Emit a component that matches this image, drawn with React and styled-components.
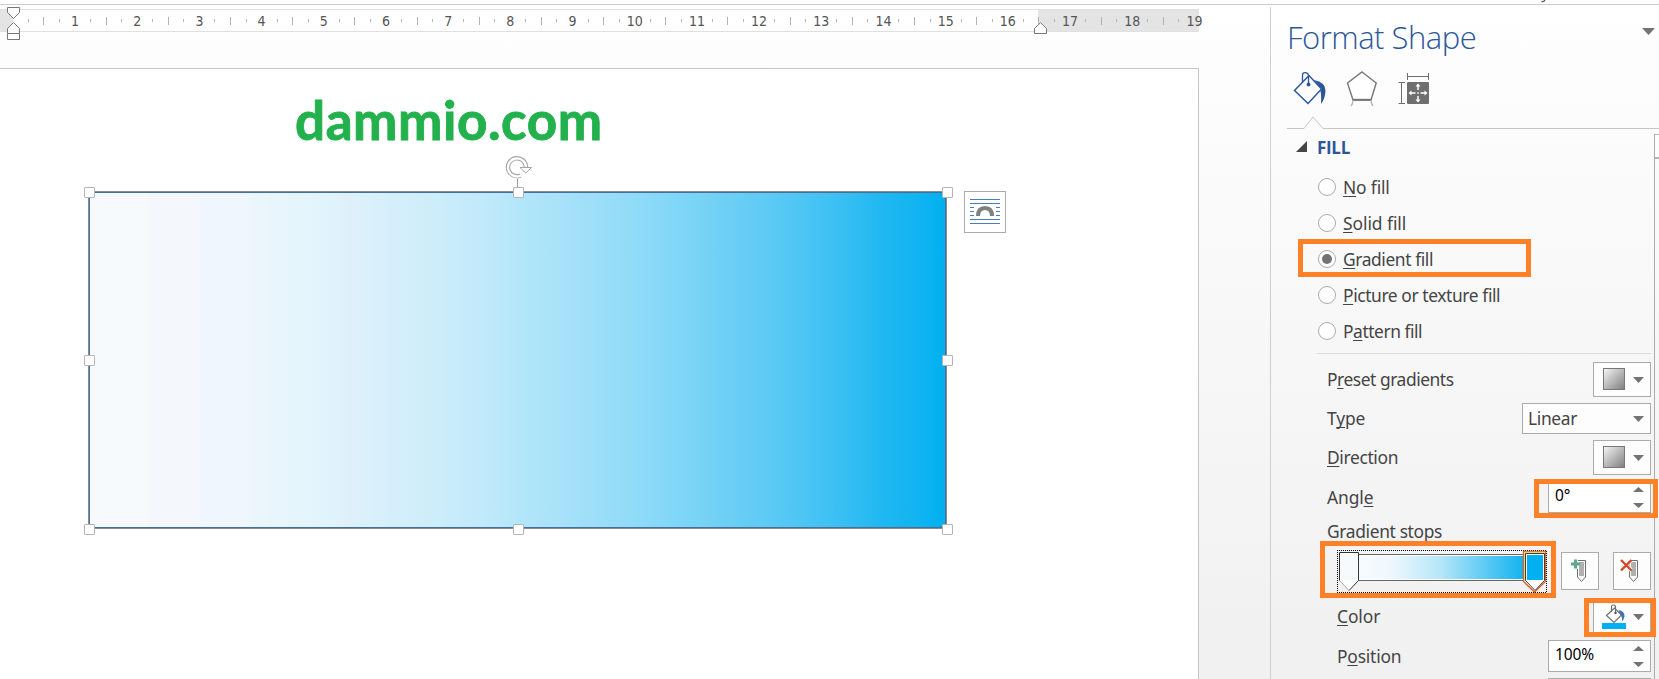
import React from "react";
import styled, { createGlobalStyle, css } from "styled-components";

const Global = createGlobalStyle`
  *{box-sizing:border-box}
  html,body{margin:0;padding:0;overflow:hidden}
  body{font-family:"Noto Sans","Open Sans",sans-serif;color:#444;}
  svg{display:block;flex:none}
`;

const Screen = styled.div`
  width: 1659px;
  height: 679px;
  overflow: hidden;
  display: flex;
  flex-direction: column;
  background: linear-gradient(#fff 5px, #fdfdfd 60px, #f1f1f1 640px);
`;
const RibbonEdge = styled.div`
  height: 5px;
  flex: none;
  background: #fff;
  border-bottom: 1px solid #cdcdcd;
  padding-left: 1539px;
`;
const Main = styled.div`
  flex: 1;
  min-height: 0;
  display: flex;
`;

/* ---------- document side ---------- */
const Workspace = styled.div`
  width: 1270px;
  flex: none;
  display: flex;
  flex-direction: column;
  padding-top: 4px;
`;
const Ruler = styled.div`
  position: relative;
  width: 1199px;
  height: 23px;
  flex: none;
  padding-left: 20.6px;
  display: flex;
  align-items: center;
  border-top: 1px solid #e0e0e0;
  border-bottom: 1px solid #e0e0e0;
  background: linear-gradient(90deg, #e4e4e4 13px, #fff 13px, #fff 1038px, #e4e4e4 1038px);
`;
const Slot = styled.div`
  width: 15.55px;
  flex: none;
  display: flex;
  justify-content: center;
  align-items: center;
`;
const Tick = styled.i`
  width: 1px;
  height: ${(p) => (p.$tall ? 8 : 3)}px;
  background: #b3b3b3;
`;
const RulerNumber = styled.span`
  font: 14px/20px "DejaVu Sans Condensed", "DejaVu Sans", sans-serif;
  font-stretch: condensed;
  color: #555;
`;
const Marker = styled.svg`
  position: absolute;
  left: ${(p) => p.$left}px;
  top: ${(p) => p.$top}px;
`;
const Page = styled.div`
  position: relative;
  width: 1199px;
  flex: 1;
  margin-top: 36px;
  padding-top: 21px;
  background: #fff;
  border-top: 1px solid #c6c6c6;
  border-right: 1px solid #c6c6c6;
`;
const Watermark = styled.div`
  padding-left: 295px;
  font: 700 53px/60px Lato, Carlito, sans-serif;
  letter-spacing: 0.55px;
  -webkit-text-stroke: 0.9px #22b14c;
  color: #22b14c;
  white-space: nowrap;
`;
const Shape = styled.div`
  position: absolute;
  left: 88px;
  top: 122px;
  width: 859px;
  height: 338px;
  border: 1px solid #8d8d8d;
`;
const ShapeFill = styled.div`
  height: 100%;
  border: 1px solid #41719c;
  background: linear-gradient(
    90deg,
    #f6fafd 0, #f6fafd 58px, #f4f8fd 59px, #f4f8fd 109px, #eff6ff 111px,
    #eff6fe 155px, #ebf5fc 167px, #e5f5fc 210px, #def1fb 260px, #d5effa 300px,
    #cdedfa 345px, #c6ebfb 370px, #bfe9fa 400px, #b3e6f9 430px, #a7e1f9 475px,
    #98ddf8 520px, #86d9f7 570px, #72d1f5 625px, #5ccaf4 680px, #3fc1f3 740px,
    #21b8f1 790px, #10b4f1 830px, #00b0f0 855px
  );
`;
const Handle = styled.i`
  position: absolute;
  left: ${(p) => p.$x}px;
  top: ${(p) => p.$y}px;
  width: 11px;
  height: 11px;
  background: #fff;
  border: 1.5px solid #b5b5b5;
  border-radius: 1px;
`;
const Rotator = styled.svg`
  position: absolute;
  left: 415px;
  top: -38px;
`;
const LayoutOptions = styled.div`
  position: absolute;
  left: 964px;
  top: 122px;
  width: 42px;
  height: 42px;
  border: 1px solid #ababab;
  background: #fff;
`;

/* ---------- task pane ---------- */
const Pane = styled.div`
  position: relative;
  flex: 1;
  margin-top: 2px;
  border-left: 1px solid #cfcfcf;
  display: flex;
  flex-direction: column;
`;
const PaneHeader = styled.div`
  display: flex;
  justify-content: space-between;
  height: 63px;
  padding: 5px 4px 0 16px;
`;
const PaneTitle = styled.h1`
  margin: 0;
  font: 300 31px/50px "Open Sans", "Noto Sans", sans-serif;
  letter-spacing: -0.5px;
  color: #2b579a;
`;
const HeaderArrow = styled.div`
  padding-top: 16px;
`;
const PaneTabs = styled.div`
  display: flex;
  height: 46px;
  padding-left: 22px;
`;
const TabIcon = styled.div`
  width: ${(p) => p.$w}px;
`;
const TabRule = styled.div`
  height: 14px;
  padding-left: 16px;
`;
const SectionTitle = styled.div`
  height: 39px;
  padding: 3px 0 0 25px;
  display: flex;
  align-items: flex-start;
  gap: 10px;
  font: 700 17px/30px "Open Sans", sans-serif;
  letter-spacing: -0.3px;
  color: #2b579a;
  svg { margin-top: 8px; }
`;
const RadioRow = styled.div`
  height: 36px;
  padding-left: 47px;
  display: flex;
  align-items: center;
  gap: 7px;
`;
const Radio = styled.span`
  width: 18px;
  height: 18px;
  border-radius: 50%;
  border: 1px solid #ababab;
  background: #fff;
  display: flex;
  align-items: center;
  justify-content: center;
  ${(p) => p.$on && css`&::after {
    content: "";
    width: 10px;
    height: 10px;
    border-radius: 50%;
    background: #737373;
  }`}
`;
const Label = styled.span`
  font-size: 17.4px;
  line-height: 24px;
  letter-spacing: ${(p) => p.$ls ?? -0.35}px;
  white-space: nowrap;
  color: #444;
`;
const Key = styled.span`
  text-decoration: underline;
  text-decoration-thickness: 1px;
  text-underline-offset: 2px;
  text-decoration-skip-ink: none;
`;
const Divider = styled.div`
  height: 1px;
  flex: none;
  margin: 4px 8px 8px 46px;
  background: #dcdcdc;
`;
const Field = styled.div`
  display: flex;
  flex: none;
  align-items: center;
  justify-content: space-between;
  height: ${(p) => p.$h}px;
  margin-bottom: ${(p) => p.$gap ?? 6}px;
  padding: 0 8px 0 ${(p) => (p.$indent ? 66 : 56)}px;
  ${(p) => p.$raise && css`${Label} { margin-top: -2px; }`}
`;
const Box = styled.div`
  width: ${(p) => p.$w}px;
  height: 100%;
  border: 1px solid #ababab;
  background: #fdfdfd;
  display: flex;
  align-items: center;
  justify-content: space-between;
  padding: 0 6px 0 5px;
`;
const SwatchBox = styled(Box)`
  padding: 0 6px 0 ${(p) => p.$pl ?? 9}px;
`;
const Swatch = styled.span`
  width: 22px;
  height: 22px;
  margin-top: -1px;
  border: 1px solid #777;
  background: linear-gradient(135deg, #f4f4f4, #808080);
`;
const SpinBox = styled(Box)`
  background: #fff;
  padding: 0 6px;
`;
const SpinValue = styled.span`
  font-size: 15.5px;
  line-height: 20px;
  letter-spacing: -0.1px;
  margin-top: -4px;
  color: #000;
`;
const StopsLabel = styled.div`
  height: 31px;
  flex: none;
  padding-left: 56px;
`;
const StopsRow = styled.div`
  height: 43px;
  flex: none;
  display: flex;
  align-items: flex-start;
  padding: 0 8px 0 66px;
  margin-bottom: 6px;
  justify-content: space-between;
`;
const StopButtons = styled.div`
  display: flex;
  gap: 14px;
  padding-top: 2px;
`;
const StopButton = styled.div`
  width: 38px;
  height: 38px;
  border: 1px solid #ababab;
  background: #fdfdfd;
`;
const NextField = styled.div`
  height: 1px;
  flex: none;
  margin: 0 8px 0 277px;
  background: #ababab;
`;
const ScrollEdge = styled.div`
  position: absolute;
  left: 383px;
  top: 127px;
  right: 0;
  bottom: 0;
  border-left: 1px solid #ababab;
`;
const ScrollButton = styled.div`
  height: 25px;
  border-top: 1px solid #b5b5b5;
  border-bottom: 2px solid #b5b5b5;
  background: #fff;
`;
const Callout = styled.div`
  position: absolute;
  left: ${(p) => p.$x}px;
  top: ${(p) => p.$y}px;
  width: ${(p) => p.$w}px;
  height: ${(p) => p.$h}px;
  border: 5px solid #ff8127;
`;

const Caret = ({ w = 11, h = 6, up }) => (
  <svg width={w} height={h} viewBox="0 0 12 6" preserveAspectRatio="none">
    <path d={up ? "M0 6L6 0L12 6Z" : "M0 0H12L6 6Z"} fill="#737373" />
  </svg>
);

const SpinArrows = styled.div`
  display: flex;
  flex-direction: column;
  gap: 11px;
`;
const Spin = ({ value }) => (
  <SpinBox $w={103}>
    <SpinValue>{value}</SpinValue>
    <SpinArrows>
      <Caret h={5} up />
      <Caret h={5} />
    </SpinArrows>
  </SpinBox>
);

const BucketIcon = () => (
  <svg width="34" height="36" viewBox="0 0 34 36" fill="none" stroke="#2b579a" strokeWidth="1.5">
    <path d="M1.5 20.5L16 5.5L28.5 19L15 33.5Z" />
    <path d="M9.5 12.5V5Q9.5 2.6 12 2.6Q15.5 2.6 15.5 6V14" strokeWidth="1.3" />
    <circle cx="15.5" cy="14.5" r="1.9" fill="#2b579a" stroke="none" />
    <path d="M21 10Q32.500 12 32.500 21Q32 29 28 34Q28.500 26 27.500 21L29 19Z" fill="#2b579a" stroke="none" />
  </svg>
);
const PentagonIcon = () => (
  <svg width="32" height="38" viewBox="0 0 32 38" fill="none" stroke="#777" strokeWidth="1.4">
    <path d="M16 2L30.200 13L25 30H7L1.500 13Z" fill="#fff" />
    <path d="M6.500 29.800H25.500" strokeWidth="2" />
    <path d="M7 30Q7 34 5 36M25 30Q25 34 27 36" stroke="#b5b5b5" />
  </svg>
);
const SizeIcon = () => (
  <svg width="32" height="36" viewBox="0 0 32 36" fill="none" stroke="#6f6f6f">
    <rect x="9" y="12" width="22" height="22" rx="1" fill="#6f6f6f" stroke="none" />
    <path d="M9.500 3V10M30.500 3V10M9.500 6.500H30.500M.5 12.500H7M.5 33.500H7M3.500 12.500V33.500" />
    <path d="M20 14.500V20M20 26V31.500M12 23H17.500M22.500 23H28" stroke="#fff" strokeWidth="1.5" />
    <path d="M17.500 16.500L20 13.500L22.500 16.500ZM17.500 29.500L20 32.500L22.500 29.500ZM13.500 20.500L10.500 23L13.500 25.500ZM26.500 20.500L29.500 23L26.500 25.500Z" fill="#fff" stroke="none" />
    <rect x="19.300" y="22.300" width="1.500" height="1.500" fill="#fff" stroke="none" />
  </svg>
);
const ColorIcon = () => (
  <svg width="25" height="26" viewBox="0 0 25 26" fill="none" stroke="#6f6f6f" strokeWidth="1.2">
    <path d="M4.500 11.500L12.500 4L19.500 11L12 18.500Z" fill="#fff" />
    <path d="M9.500 8V2.500Q9.500 1 11.500 1Q13.500 1 13.500 3V9" />
    <circle cx="13.500" cy="9" r="1.200" fill="#555" stroke="none" />
    <path d="M16.500 6Q22.500 7 22.500 12Q22 16 20 17.500Q20.500 13 18.500 11Z" fill="#3f75b5" stroke="none" />
    <rect x="0" y="19" width="24" height="6" fill="#00b0f0" stroke="none" />
  </svg>
);
const StopIcon = ({ remove }) => (
  <svg width="36" height="36" viewBox="0 0 36 36" fill="none">
    <path d="M15.500 7.500H23.500V24L19.500 28.500L15.500 24Z" stroke="#6f6f6f" fill="#fdfdfd" />
    <path d="M17 9H22V23H17Z" fill="#b0b0b0" />
    {remove ? (
      <>
        <path d="M7 7L17 17M17 7L7 17" stroke="#fdfdfd" strokeWidth="4.500" />
        <path d="M7 7L17.500 17.500M17.500 7L7 17.500" stroke="#d24726" strokeWidth="2.4" />
      </>
    ) : (
      <>
        <path d="M8 5H16V16H8Z" fill="#fdfdfd" />
        <path d="M13.500 6.500V15.500M9 11H18" stroke="#62a68c" strokeWidth="3.200" />
      </>
    )}
  </svg>
);
const GradientStops = () => (
  <svg width="211" height="44" viewBox="0 0 211 44" fill="none">
    <defs>
      <linearGradient id="stops">
        <stop offset="0" stopColor="#f7fbfe" />
        <stop offset=".2" stopColor="#eff8fe" />
        <stop offset=".5" stopColor="#b5e6f9" />
        <stop offset=".75" stopColor="#63ccf5" />
        <stop offset="1" stopColor="#12b3f1" />
      </linearGradient>
    </defs>
    <path d="M0 .5H210M0 42.500H210M.5 0V43M209.500 1V43" stroke="#000" strokeDasharray="1 1" shapeRendering="crispEdges" />
    <rect x="20" y="4.500" width="170" height="26" fill="#fff" stroke="#666" />
    <rect x="20" y="6" width="167" height="23" fill="url(#stops)" />
    <path d="M2.500 2.500H21.500V30.500L12 40.500L2.500 30.500Z" fill="#fff" />
    <path d="M12 40.500L2.500 30.500" stroke="#aaa" />
    <path d="M2.500 30.500V2.500H21.500V30.500L12 40.500" stroke="#333" />
    <rect x="4" y="4" width="16" height="26" fill="#f6fafd" />
    <path d="M186.500 1.500H208.500V31.500L197.500 42L186.500 31.500Z" fill="#fff" stroke="#d8602c" strokeWidth="1.300" />
    <path d="M187.500 2.500H207.500M187.800 3V31" stroke="#f3d36b" strokeWidth="1.500" />
    <path d="M188.500 3.500H207.500V30.500L198 40.500L188.500 30.500Z" stroke="#443c33" fill="#fff" />
    <rect x="190" y="5" width="16" height="25" fill="#00b0f0" />
  </svg>
);

const slots = Array.from({ length: 76 }, (_, i) => i);
const fills = [
  ["", "N", "o fill", -0.15],
  ["", "S", "olid fill", -0.05],
  ["", "G", "radient fill", -0.4],
  ["", "P", "icture or texture fill", -0.4],
  ["P", "a", "ttern fill", -0.45],
];
const Text = ({ parts }) => (
  <Label $ls={parts[3]}>{parts[0]}<Key>{parts[1]}</Key>{parts[2]}</Label>
);
const handles = [
  [-5, -5], [424, -5], [853, -5],
  [-5, 163], [853, 163],
  [-5, 332], [424, 332], [853, 332],
];

export default function App() {
  return (
    <Screen>
      <Global />
      <RibbonEdge>
        <svg width="10" height="3"><path d="M2.500 1.500Q5 2 6 0" stroke="#555" fill="none" strokeWidth="1.300" /></svg>
      </RibbonEdge>
      <Main>
        <Workspace>
          <Ruler>
            {slots.map((i) => (
              <Slot key={i}>
                {i % 4 === 3 ? <RulerNumber>{(i + 1) / 4}</RulerNumber> : <Tick $tall={i % 4 === 1} />}
              </Slot>
            ))}
            <Marker $left={7} $top={-3} width="14" height="34" fill="#fff" stroke="#777">
              <path d="M.5 .5H12.500V5.500L6.500 11.500L.5 5.500Z" />
              <path d="M.5 26.500V21.500L6.500 15.500L12.500 21.500V26.500Z" />
              <path d="M.5 26.500H12.500V32.500H.5Z" />
            </Marker>
            <Marker $left={1034} $top={12} width="14" height="14" fill="#fff" stroke="#777">
              <path d="M.5 11.500V6.500L6.500 .7L12.500 6.500V11.500Z" />
            </Marker>
          </Ruler>
          <Page>
            <Watermark>dammio.com</Watermark>
            <Shape>
              <ShapeFill />
              <Rotator width="30" height="38" viewBox="0 0 30 38" fill="none">
                <path d="M13.500 25V34" stroke="#999" />
                <path d="M16.500 21.500A9 9 0 1 1 22 13" stroke="#a6a6a6" strokeWidth="4.500" />
                <path d="M17 21.500A9 9 0 1 1 22 14" stroke="#fff" strokeWidth="2.300" />
                <path d="M16 13.500H27.500L21.800 19Z" fill="#fff" stroke="#a6a6a6" />
              </Rotator>
              {handles.map(([x, y]) => <Handle key={`${x} ${y}`} $x={x} $y={y} />)}
            </Shape>
            <LayoutOptions>
              <svg width="40" height="40" fill="none">
                <path d="M5 7.500H35M5 11.500H35M5 15.500H9M31 15.500H35M5 19.500H9M31 19.500H35M5 23.500H9M31 23.500H35M5 27.500H35M5 31.500H35" stroke="#4a7ebb" />
                <path d="M13 24Q13 16 20 16Q27 16 27 24" stroke="#808080" strokeWidth="4" />
              </svg>
            </LayoutOptions>
          </Page>
        </Workspace>
        <Pane>
          <PaneHeader>
            <PaneTitle>Format Shape</PaneTitle>
            <HeaderArrow><Caret w={13} h={7} /></HeaderArrow>
          </PaneHeader>
          <PaneTabs>
            <TabIcon $w={53}><BucketIcon /></TabIcon>
            <TabIcon $w={52}><PentagonIcon /></TabIcon>
            <TabIcon $w={40}><SizeIcon /></TabIcon>
          </PaneTabs>
          <TabRule>
            <svg width="372" height="14" fill="none"><path d="M0 12.500H17L26 1L36 12.500H372" stroke="#c6c6c6" /></svg>
          </TabRule>
          <SectionTitle>
            <svg width="11" height="11"><path d="M11 0V11H0Z" fill="#444" /></svg>
            FILL
          </SectionTitle>
          {fills.map((parts, i) => (
            <RadioRow key={i}>
              <Radio $on={i === 2} />
              <Text parts={parts} />
            </RadioRow>
          ))}
          <Divider />
          <Field $h={35} $raise>
            <Text parts={["P", "r", "eset gradients", -0.45]} />
            <SwatchBox $w={58}><Swatch /><Caret /></SwatchBox>
          </Field>
          <Field $h={31} $raise>
            <Text parts={["T", "y", "pe", -0.1]} />
            <Box $w={129}><Label>Linear</Label><Caret /></Box>
          </Field>
          <Field $h={35} $raise>
            <Text parts={["", "D", "irection"]} />
            <SwatchBox $w={58}><Swatch /><Caret /></SwatchBox>
          </Field>
          <Field $h={32} $gap={6}>
            <Text parts={["Angl", "e", "", -0.1]} />
            <Spin value="0°" />
          </Field>
          <StopsLabel><Label>Gradient stops</Label></StopsLabel>
          <StopsRow>
            <GradientStops />
            <StopButtons>
              <StopButton><StopIcon /></StopButton>
              <StopButton><StopIcon remove /></StopButton>
            </StopButtons>
          </StopsRow>
          <Field $h={35} $indent $raise>
            <Text parts={["", "C", "olor", -0.1]} />
            <SwatchBox $w={58} $pl={8}><ColorIcon /><Caret /></SwatchBox>
          </Field>
          <Field $h={32} $indent>
            <Text parts={["P", "o", "sition", -0.2]} />
            <Spin value="100%" />
          </Field>
          <NextField />
          <ScrollEdge><ScrollButton /></ScrollEdge>
          <Callout $x={27} $y={232} $w={233} $h={38} />
          <Callout $x={263} $y={472} $w={124} $h={39} />
          <Callout $x={49} $y={534} $w={236} $h={57} />
          <Callout $x={313} $y={591} $w={72} $h={39} />
        </Pane>
      </Main>
    </Screen>
  );
}
